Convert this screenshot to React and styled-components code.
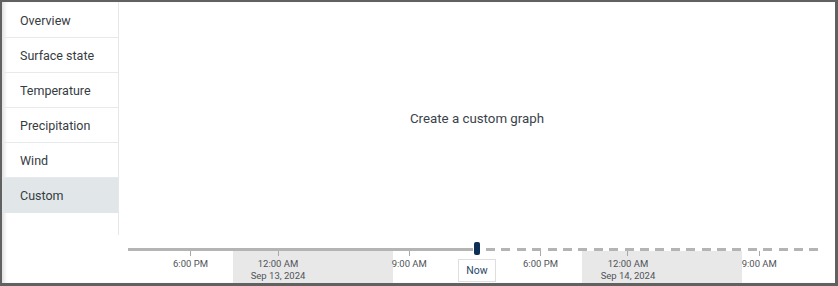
import React from "react";
import styled, { createGlobalStyle } from "styled-components";

const Global = createGlobalStyle`
  html, body { margin: 0; padding: 0; background: #fff; }
  body { font-family: Roboto, Inter, "Noto Sans", sans-serif; }
  * { box-sizing: border-box; }
`;

const Frame = styled.div`
  width: 838px;
  height: 286px;
  border-style: solid;
  border-color: #616161;
  border-width: 2px 3px 3px 2px;
  display: flex;
  flex-direction: column;
  background: #fff;
  box-shadow: inset 4px 0 4px -2px rgba(0, 0, 0, 0.14);
  overflow: hidden;
`;

const TopRow = styled.div`
  display: flex;
  height: 233px;
`;

const Sidebar = styled.nav`
  width: 117px;
  border-right: 1px solid #e3e8ea;
  padding-top: 1px;
  display: flex;
  flex-direction: column;
`;

const NavItem = styled.div`
  height: 35px;
  display: flex;
  align-items: center;
  padding-left: 18px;
  font-size: 12.5px;
  color: #363c42;
  border-bottom: ${(p) => (p.$last ? "none" : "1px solid #e6eaec")};
  background: ${(p) => (p.$active ? "#e1e7e9" : "transparent")};
`;

const Main = styled.main`
  flex: 1;
  display: flex;
  align-items: center;
  justify-content: center;
  font-size: 13.3px;
  color: #3a434c;
`;

const TimelineRow = styled.div`
  flex: 1;
  padding-left: 126px;
  display: flex;
`;

const Axis = styled.div`
  position: relative;
  width: 692px;
  height: 100%;
`;

const SolidTrack = styled.div`
  position: absolute;
  top: 13px;
  left: 0;
  height: 3px;
  background: #b4b4b4;
`;

const DashedTrack = styled.div`
  position: absolute;
  top: 13px;
  right: 0;
  height: 3px;
  background: repeating-linear-gradient(
    90deg,
    #b4b4b4 0 9px,
    transparent 9px 15.4px
  );
`;

const Night = styled.div`
  position: absolute;
  top: 16px;
  bottom: 0;
  background: #e8e8e8;
`;

const Tick = styled.div`
  position: absolute;
  top: 16px;
  width: 1px;
  height: 5px;
  margin-left: -0.5px;
  background: #a9a9a9;
`;

const Label = styled.div`
  position: absolute;
  top: 23px;
  transform: translateX(-50%);
  display: flex;
  flex-direction: column;
  align-items: center;
  font-size: 9.5px;
  line-height: 12px;
  color: #4f5358;
  white-space: nowrap;
`;

const Handle = styled.div`
  position: absolute;
  top: 7px;
  width: 6px;
  height: 13px;
  margin-left: -3px;
  border-radius: 2px;
  background: #0e2f56;
`;

const NowButton = styled.button`
  position: absolute;
  top: 24px;
  width: 38px;
  height: 23px;
  margin-left: -19px;
  border: 1px solid #dedede;
  background: #fff;
  font-family: inherit;
  font-size: 10.5px;
  color: #2a4868;
  padding: 0;
`;

const PX_PER_HOUR = 14.583;
const ORIGIN = 150; // Sep 13, 00:00 within axis
const x = (h) => ORIGIN + h * PX_PER_HOUR;
const NOW = 13.65;

const items = ["Overview", "Surface state", "Temperature", "Precipitation", "Wind", "Custom"];

const ticks = [
  { h: -6, t: "6:00 PM" },
  { h: 0, t: "12:00 AM", d: "Sep 13, 2024" },
  { h: 9, t: "9:00 AM" },
  { h: 18, t: "6:00 PM" },
  { h: 24, t: "12:00 AM", d: "Sep 14, 2024" },
  { h: 33, t: "9:00 AM" },
];

const nights = [
  [-3.09, 7.89],
  [20.85, 31.82],
];

export default function App() {
  const nowX = x(NOW);
  return (
    <>
      <Global />
      <Frame>
        <TopRow>
          <Sidebar>
            {items.map((it, i) => (
              <NavItem key={it} $active={it === "Custom"} $last={i === items.length - 1}>
                {it}
              </NavItem>
            ))}
          </Sidebar>
          <Main>Create a custom graph</Main>
        </TopRow>
        <TimelineRow>
          <Axis>
            {nights.map(([a, b]) => (
              <Night key={a} style={{ left: x(a), width: x(b) - x(a) }} />
            ))}
            <SolidTrack style={{ width: nowX - 4 }} />
            <DashedTrack style={{ left: nowX + 9 }} />
            {ticks.map((t) => (
              <React.Fragment key={t.h}>
                <Tick style={{ left: x(t.h) }} />
                <Label style={{ left: x(t.h) }}>
                  <span>{t.t}</span>
                  {t.d && <span>{t.d}</span>}
                </Label>
              </React.Fragment>
            ))}
            <Handle style={{ left: nowX }} />
            <NowButton style={{ left: nowX }}>Now</NowButton>
          </Axis>
        </TimelineRow>
      </Frame>
    </>
  );
}
